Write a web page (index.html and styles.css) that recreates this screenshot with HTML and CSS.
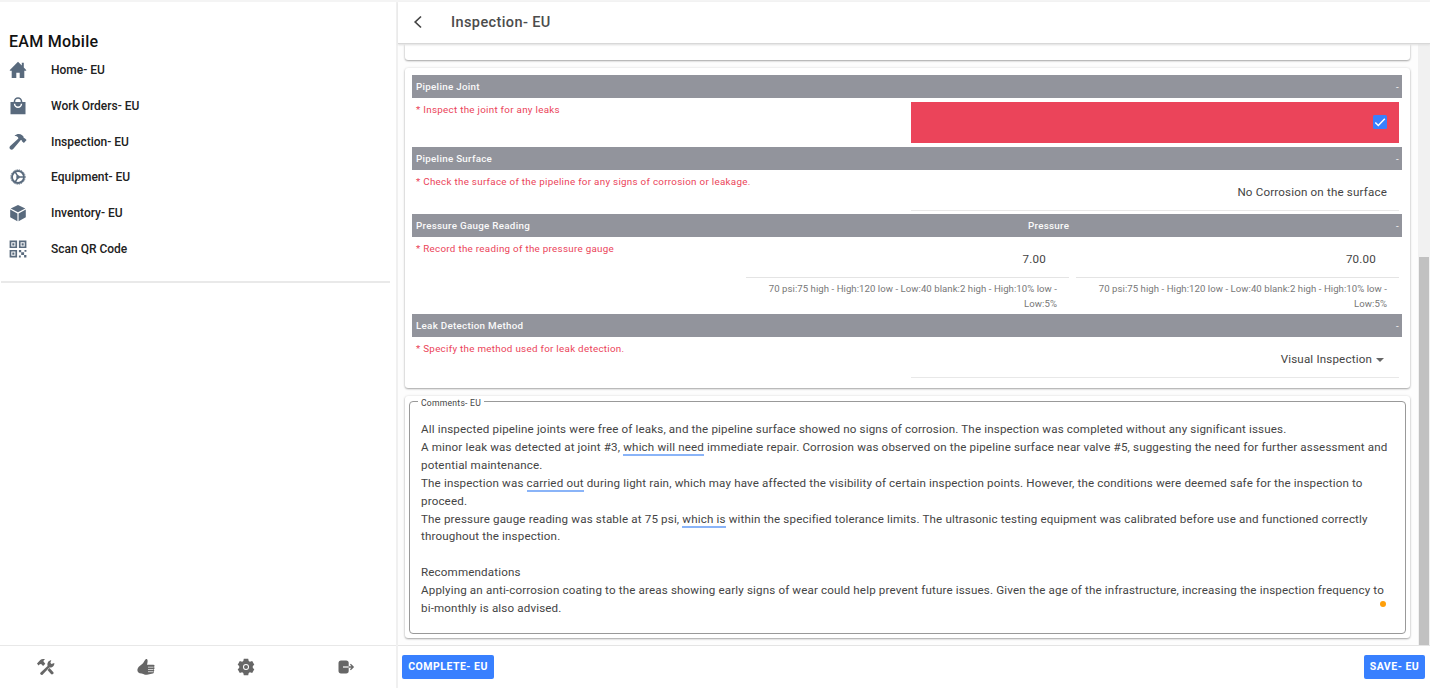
FILE: index.html
```html
<!DOCTYPE html>
<html lang="en">
<head>
<meta charset="utf-8">
<title>EAM Mobile</title>
<link rel="stylesheet" href="styles.css">
</head>
<body>
<div class="app">
  <aside class="sidebar">
    <h1 class="brand">EAM Mobile</h1>
    <nav class="nav">
      <a class="nav-item"><svg viewBox="0 0 18 18"><path d="M9 .8 .6 9.2l.5.6h1.6V17h4.6v-5.2h3.4V17h4.6V9.800h1.600l.5-.6L14.800 6.500V1.800h-2v2.600z"/></svg><span>Home- EU</span></a>
      <a class="nav-item"><svg viewBox="0 0 18 18"><path fill-rule="evenodd" d="M1.500 5h3.200V4.500a4.300 4.300 0 0 1 8.600 0V5h3.200v12.300h-15zM6.300 5h5.400v-.5a2.700 2.700 0 0 0-5.400 0zM4.800 6.800a4.200 4.200 0 0 0 8.400 0h-1.500a2.700 2.700 0 0 1-5.400 0z"/></svg><span>Work Orders- EU</span></a>
      <a class="nav-item"><svg viewBox="0 0 18 18"><path d="M5.800 2.600C7.800.700 11 .500 13.200 2.300l1.400 1.500.1 1.200 1 .3 1.900 1.600-2.700 3.100-2-1.700-.1-1.100-1-.3L4.400 15.700c-1.100 1.100-2.300 1.300-3.300.2s-.7-2.200.4-3.200L9.400 5.400 9 4.300c-.8-.9-1.800-1.200-3.200-1.200z"/></svg><span>Inspection- EU</span></a>
      <a class="nav-item"><svg viewBox="0 0 18 18"><g fill="none" stroke="#596a7d"><circle cx="9" cy="9" r="6" stroke-width="1.900"/><circle cx="9" cy="9" r="7.200" stroke-width=".9" stroke-dasharray="1.300 1"/><path stroke-width="1.500" d="M14.500 9H9.200L6.300 4.200M9.200 9l-2.900 4.800"/></g><circle cx="9" cy="9" r="1.800"/></svg><span>Equipment- EU</span></a>
      <a class="nav-item"><svg viewBox="0 0 18 18"><path d="M9 .9 16.300 4.500 9 8.300 1.700 4.500zM1.200 5.600l7.200 3.800v7.800l-7.200-4zM16.800 5.600 9.600 9.400v7.800l7.200-4z"/></svg><span>Inventory- EU</span></a>
      <a class="nav-item"><svg viewBox="0 0 18 18"><path fill-rule="evenodd" d="M.6.600h7.500v7.500H.6zM2.300 2.300v4.100h4.100V2.300zM3.300 3.300h2.100v2.100H3.300zM9.900.600h7.500v7.500H9.900zM11.600 2.300v4.100h4.100V2.300zM12.600 3.300h2.100v2.100h-2.100zM.6 9.900h7.500v7.500H.6zM2.300 11.600v4.100h4.100v-4.100zM3.300 12.600h2.100v2.100H3.300zM9.900 9.900h2.300v2.300H9.900zM12.200 12.200h2.900v2.900h-2.900zM15.500 9.900h1.900v1.900h-1.900zM15.100 15.100h2.300v2.300h-2.300zM9.900 15.500h1.900v1.900H9.900z"/></svg><span>Scan QR Code</span></a>
    </nav>
    <div class="tabs">
      <span class="tab"><svg viewBox="0 0 18 18"><path d="M0 5.500 3.300 2C4.500.8 6.700.700 8 1.400 6.700 1.900 6.300 2.500 6.500 3.600l1.800 2.100-2.200 2.200-2-2-1.300.3-1.300 1.200z"/><path d="m3.600 14.600 7-6.700c-.6-2.400.1-5.200 3.700-6l-.9 2.800 1 1.200 2.900-1c.4 2.900-2.200 5-4.900 4.500l-6.600 7c-1.500 1.400-3.600-.4-2.200-1.800z"/><path d="m10.500 12 2-2 3.700 4c.7.800.3 1.600-.2 2.100s-1.400.7-2 0z"/></svg></span>
      <span class="tab"><svg viewBox="0 0 18 18"><path d="M.5 11c1-3 3.800-3.600 5.500-5.700C7.500 3.400 8 1.300 9.200 1c1.800-.1 1.700 2.700.8 5.800h6.300c1.700 0 1.600 2.100.4 2.300 1.300.5 1 2-.1 2.300 1 .5.800 1.900-.2 2.200.7.600.5 1.800-.7 2L10 16.800c-3 0-4.500-1.400-7.300-1.600C.7 14.500.1 12.500.5 11z"/><path d="M11 9.200h5.500M11 11.500h5.300M11 13.700h5" stroke="#fff" stroke-width=".7"/></svg></span>
      <span class="tab"><svg viewBox="0 0 18 18"><path fill-rule="evenodd" d="M6.800.800h4.400l.5 2.300 1.200.7 2.300-.8 2.100 3.700L15.800 8v2l1.500 1.300-2.100 3.700-2.300-.8-1.200.7-.5 2.300H6.800l-.5-2.300-1.200-.7-2.300.8-2.100-3.700L2.200 10V8L.7 6.700 2.800 3l2.300.8 1.200-.7zM9 6a3 3 0 1 0 0 6 3 3 0 0 0 0-6z"/><circle cx="9" cy="9" r="2"/></svg></span>
      <span class="tab"><svg viewBox="0 0 18 18"><path d="M1.500 5c0-1.600.9-2.500 2.500-2.500h5.200c1.600 0 2.500.9 2.500 2.500v8c0 1.600-.9 2.500-2.500 2.500H4c-1.600 0-2.500-.9-2.500-2.500z"/><path d="M6 9h5.700" stroke="#fff" stroke-width="1.200"/><path d="M11.700 9h4.500M13.400 6.200 16.200 9l-2.800 2.800" fill="none" stroke="#666" stroke-width="1.300"/></svg></span>
    </div>
  </aside>

  <main class="main">
    <header class="header">
      <svg class="back" viewBox="0 0 10 14"><path d="M8 1.500 2.200 7 8 12.500"/></svg>
      <h2 class="title">Inspection- EU</h2>
    </header>

    <div class="scroll">
      <div class="cards">
        <section class="card card-prev"></section>

        <section class="card checklist">
          <div class="bar"><span class="bar-name">Pipeline Joint</span><span class="bar-toggle">-</span></div>
          <div class="row row-joint">
            <span class="question">* Inspect the joint for any leaks</span>
            <div class="alert"><svg class="check" viewBox="0 0 14 14"><rect width="14" height="14" rx="1.500"/><path d="m2.300 7.500 3 3L11.800 3.800"/></svg></div>
          </div>
          <div class="bar"><span class="bar-name">Pipeline Surface</span><span class="bar-toggle">-</span></div>
          <div class="row row-surface">
            <span class="question">* Check the surface of the pipeline for any signs of corrosion or leakage.</span>
            <div class="field"><span>No Corrosion on the surface</span></div>
          </div>
          <div class="bar"><span class="bar-name">Pressure Gauge Reading</span><span class="bar-mid">Pressure</span><span class="bar-toggle">-</span></div>
          <div class="row row-gauge">
            <span class="question">* Record the reading of the pressure gauge</span>
            <div class="reading"><div class="num">7.00</div><p class="hint">70 psi:75 high - High:120 low - Low:40 blank:2 high - High:10% low -<br>Low:5%</p></div>
            <div class="reading"><div class="num">70.00</div><p class="hint">70 psi:75 high - High:120 low - Low:40 blank:2 high - High:10% low -<br>Low:5%</p></div>
          </div>
          <div class="bar"><span class="bar-name">Leak Detection Method</span><span class="bar-toggle">-</span></div>
          <div class="row row-leak">
            <span class="question">* Specify the method used for leak detection.</span>
            <div class="field"><span>Visual Inspection</span><i class="caret"></i></div>
          </div>
        </section>

        <section class="card comments">
          <div class="box">
            <span class="legend">Comments- EU</span>
            <div class="text">
              <p>All inspected pipeline joints were free of leaks, and the pipeline surface showed no signs of corrosion. The inspection was completed without any significant issues.</p>
              <p>A minor leak was detected at joint #3, <u>which will need</u> immediate repair. Corrosion was observed on the pipeline surface near valve #5, suggesting the need for further assessment and<br>potential maintenance.</p>
              <p>The inspection was <u>carried out</u> during light rain, which may have affected the visibility of certain inspection points. However, the conditions were deemed safe for the inspection to<br>proceed.</p>
              <p>The pressure gauge reading was stable at 75 psi, <u>which is</u> within the specified tolerance limits. The ultrasonic testing equipment was calibrated before use and functioned correctly<br>throughout the inspection.</p>
              <p class="gap">Recommendations</p>
              <p>Applying an anti-corrosion coating to the areas showing early signs of wear could help prevent future issues. Given the age of the infrastructure, increasing the inspection frequency to<br>bi-monthly is also advised.</p>
            </div>
            <i class="dot"></i>
          </div>
        </section>
      </div>
      <div class="track"><div class="thumb"></div></div>
    </div>

    <footer class="footer">
      <button class="btn btn-complete">COMPLETE- EU</button>
      <button class="btn btn-save">SAVE- EU</button>
    </footer>
  </main>
</div>
</body>
</html>
```
FILE: styles.css
```css
* { box-sizing: border-box; margin: 0; padding: 0; }
body { font-family: Roboto, "Liberation Sans", sans-serif; color: #444; background: #fff; overflow: hidden; }
.app { display: flex; width: 1430px; height: 688px; border-top: 2px solid #f4f4f4; }

.sidebar { width: 398px; flex: none; border-right: 2px solid #f0f0f0; display: flex; flex-direction: column; overflow: hidden; }
.brand { margin: 30px 0 0 9px; height: 20px; font-size: 16px; line-height: 20px; font-weight: 500; letter-spacing: .3px; color: #111; white-space: nowrap; }
.nav { width: 389px; margin-left: 1px; height: 231px; border-bottom: 2px solid #e9e9e9; }
.nav-item { display: flex; align-items: center; height: 35.850px; padding-left: 8px; font-size: 12px; font-weight: 500; color: #222; }
.nav-item svg { width: 18px; height: 18px; margin-right: 24px; fill: #596a7d; }
.tabs { margin-top: auto; height: 43px; border-top: 1px solid #e8e8e8; display: flex; }
.tab { flex: none; width: 100px; display: flex; align-items: center; justify-content: center; padding-right: 9px; }
.tab svg { width: 18px; height: 18px; fill: #666; }

.main { flex: 1; min-width: 0; display: flex; flex-direction: column; }
.header { height: 42px; flex: none; display: flex; align-items: center; padding-left: 15px; border-bottom: 1px solid #d8d8d8; box-shadow: 0 1px 2px #ddd; z-index: 1; background: #fff; }
.back { width: 10px; height: 14px; fill: none; stroke: #444; stroke-width: 1.700; margin: 0 28px 1px 0; }
.title { font-size: 14.500px; font-weight: 500; letter-spacing: .4px; color: #4c4c4c; }

.scroll { flex: 1; min-height: 0; display: flex; justify-content: space-between; background: #fdfdfd; }
.cards { padding-left: 7px; width: 1012px; }
.card { background: #fff; border-radius: 3px; box-shadow: 0 1px 2px rgba(0,0,0,.32), 0 0 3px rgba(0,0,0,.1); }
.card-prev { height: 16px; margin-bottom: 8px; border-radius: 0 0 3px 3px; }
.checklist { height: 320px; padding: 7px 8px 0 7px; margin-bottom: 8px; }
.bar { display: flex; align-items: center; height: 23px; padding: 0 3px 0 4px; background: #92949c; color: #fafafa; font-size: 9.800px; font-weight: 500; letter-spacing: .28px; }
.bar-mid { margin-left: auto; width: 326px; }
.bar-toggle { margin-left: auto; font-weight: 400; }
.bar-mid + .bar-toggle { margin-left: 42px; }
.row { display: flex; padding-right: 3px; }
.question { flex: 1; padding: 5px 0 0 4px; font-size: 9.800px; line-height: 14px; letter-spacing: .29px; color: #eb445a; white-space: nowrap; }
.row-joint { height: 49px; padding-top: 4px; padding-bottom: 4px; }
.row-joint .question { padding-top: 1px; }
.alert { width: 488px; background: #eb445a; display: flex; align-items: center; justify-content: flex-end; padding-right: 12px; }
.check { width: 14px; height: 14px; margin-bottom: 1px; fill: #3880ff; }
.check path { fill: none; stroke: #fff; stroke-width: 1.500; }
.row-surface { height: 44px; padding-bottom: 3px; }
.row-leak { height: 44px; padding-bottom: 3px; }
.field { width: 488px; display: flex; align-items: center; justify-content: flex-end; padding: 3px 12px 0 0; border-bottom: 1px solid #e8e8e8; font-size: 11.600px; letter-spacing: .17px; }
.caret { border: 4px solid transparent; border-top-color: #666; border-bottom: 0; margin: 2px 3px 0 4px; }
.row-gauge { height: 77px; gap: 7px; }
.reading { width: 323px; }
.num { height: 41px; padding: 3px 23px 0 0; border-bottom: 1px solid #e4e4e4; font-size: 11.600px; line-height: 38px; letter-spacing: .2px; text-align: right; }
.hint { padding: 3px 12px 0 0; font-size: 9.600px; line-height: 15px; letter-spacing: .05px; text-align: right; white-space: nowrap; color: #777; }

.comments { height: 242px; padding: 5px 4px 4px; }
.box { position: relative; height: 233px; border: 1px solid #999; border-radius: 4px; padding: 0 12px 0 11px; }
.legend { position: absolute; left: 8px; top: -4px; padding: 0 3px; background: #fff; font-size: 8.600px; line-height: 11px; letter-spacing: .25px; }
.text { padding-top: 19px; font-size: 11.600px; line-height: 17.900px; letter-spacing: .153px; white-space: nowrap; }
.gap { margin-top: 17.900px; }
.text u { text-decoration: none; box-shadow: 0 2px #8ab4f8; }
.dot { position: absolute; right: 19px; bottom: 26px; width: 6px; height: 6px; border-radius: 50%; background: #ff9f0a; }
.track { width: 12px; background: #f1f1f1; padding: 213px 1px 0; display: flex; }
.thumb { flex: 1; background: #c1c1c1; }

.footer { height: 43px; flex: none; border-top: 1px solid #e4e4e4; display: flex; justify-content: space-between; align-items: center; padding: 0 5px 0 4px; background: #fff; }
.btn { height: 24px; padding-bottom: 1px; border: 0; border-radius: 2px; background: #3880ff; color: #fff; font: 700 10.500px Roboto, sans-serif; letter-spacing: .5px; white-space: nowrap; }
.btn-complete { width: 92px; }
.btn-save { width: 61px; }
```
